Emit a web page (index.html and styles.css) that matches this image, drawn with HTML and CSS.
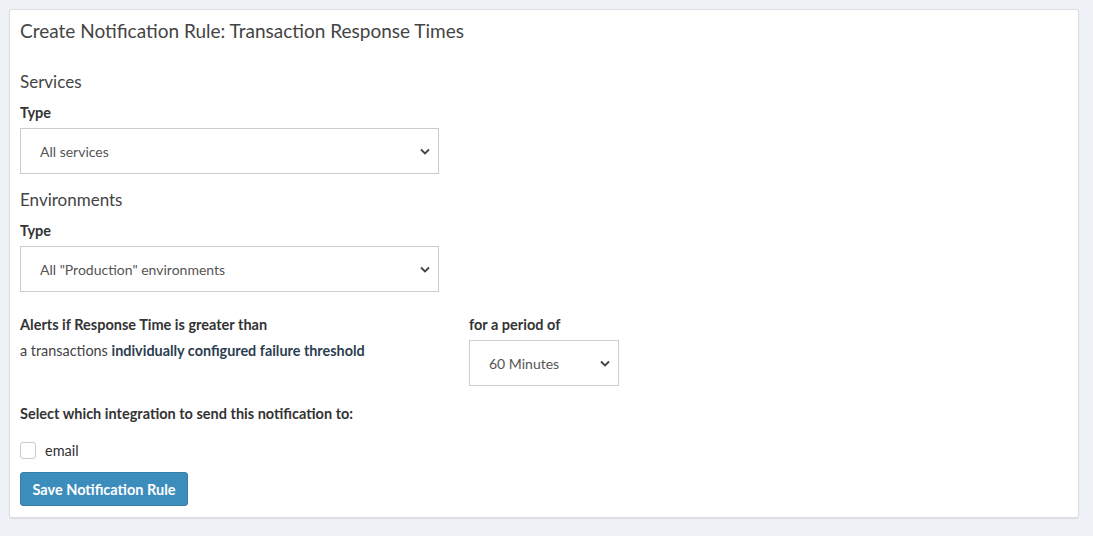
FILE: index.html
```html
<!DOCTYPE html>
<html>
<head>
<meta charset="utf-8">
<link rel="stylesheet" href="styles.css">
</head>
<body>
<div class="card">
  <h3 class="title">Create Notification Rule: Transaction Response Times</h3>

  <h4 class="section">Services</h4>
  <div class="label">Type</div>
  <div class="select wide">
    <span>All services</span>
    <svg class="chev" width="10" height="7" viewBox="0 0 10 7"><path d="M1 1.5 L5 5.5 L9 1.5" fill="none" stroke="#444" stroke-width="1.8"/></svg>
  </div>

  <h4 class="section env">Environments</h4>
  <div class="label">Type</div>
  <div class="select wide">
    <span>All "Production" environments</span>
    <svg class="chev" width="10" height="7" viewBox="0 0 10 7"><path d="M1 1.5 L5 5.5 L9 1.5" fill="none" stroke="#444" stroke-width="1.8"/></svg>
  </div>

  <div class="row">
    <div class="col-left">
      <div class="label">Alerts if Response Time is greater than</div>
      <div class="desc">a transactions <strong>individually configured failure threshold</strong></div>
    </div>
    <div class="col-right">
      <div class="label">for a period of</div>
      <div class="select narrow">
        <span>60 Minutes</span>
        <svg class="chev" width="10" height="7" viewBox="0 0 10 7"><path d="M1 1.5 L5 5.5 L9 1.5" fill="none" stroke="#444" stroke-width="1.8"/></svg>
      </div>
    </div>
  </div>

  <div class="label integ">Select which integration to send this notification to:</div>
  <label class="check">
    <span class="box"></span>
    <span>email</span>
  </label>
  <button class="btn">Save Notification Rule</button>
</div>
</body>
</html>
```

FILE: styles.css
```css
* { box-sizing: border-box; }
html, body { margin: 0; }
body {
  background: #eef1f6;
  padding: 9px 14px 0 9px;
  font-family: Lato, "Open Sans", sans-serif;
  color: #333;
  height: 536px;
}
.card {
  width: 1070px;
  background: #fff;
  border: 1px solid #dcdde0;
  border-radius: 3px;
  box-shadow: 0 1px 1px rgba(0,0,0,0.08);
  padding: 10px 10px 11px 10px;
}
.title {
  margin: 0;
  font-size: 19px;
  line-height: 22px;
  font-weight: 400;
  color: #444;
}
.section {
  margin: 30px 0 0 0;
  font-size: 17px;
  line-height: 20px;
  font-weight: 400;
  color: #444;
}
.section.env { margin-top: 16px; }
.label {
  margin-top: 11px;
  font-size: 14.5px;
  line-height: 20px;
  font-weight: 700;
  color: #333;
}
.select {
  margin-top: 5px;
  height: 46px;
  border: 1px solid #ccc;
  display: flex;
  align-items: center;
  justify-content: space-between;
  padding: 0 8px 0 19px;
  font-size: 14px;
  color: #555;
  background: #fff;
}
.select.wide { width: 419px; }
.select.narrow { width: 150px; }
.chev { display: block; }
.row {
  display: flex;
  margin-top: 23px;
}
.row .label { margin-top: 0; }
.col-left { width: 449px; }
.desc {
  margin-top: 6px;
  font-size: 14.4px;
  line-height: 20px;
  color: #444;
}
.desc strong {
  font-weight: 700;
  color: #2c3e50;
}
.label.integ { margin-top: 18px; }
.check {
  display: flex;
  align-items: center;
  gap: 9px;
  margin-top: 16px;
  height: 20px;
  font-size: 14.5px;
  color: #333;
}
.box {
  width: 16px;
  height: 17px;
  border: 1px solid #c8c8c8;
  border-radius: 3px;
  background: #fff;
}
.btn {
  display: block;
  margin-top: 12px;
  height: 34px;
  width: 168px;
  background: #3c8dbc;
  border: 1px solid #367fa9;
  border-radius: 3px;
  color: #fff;
  font-family: inherit;
  font-size: 14.5px;
  font-weight: 700;
  padding: 0;
}
```
